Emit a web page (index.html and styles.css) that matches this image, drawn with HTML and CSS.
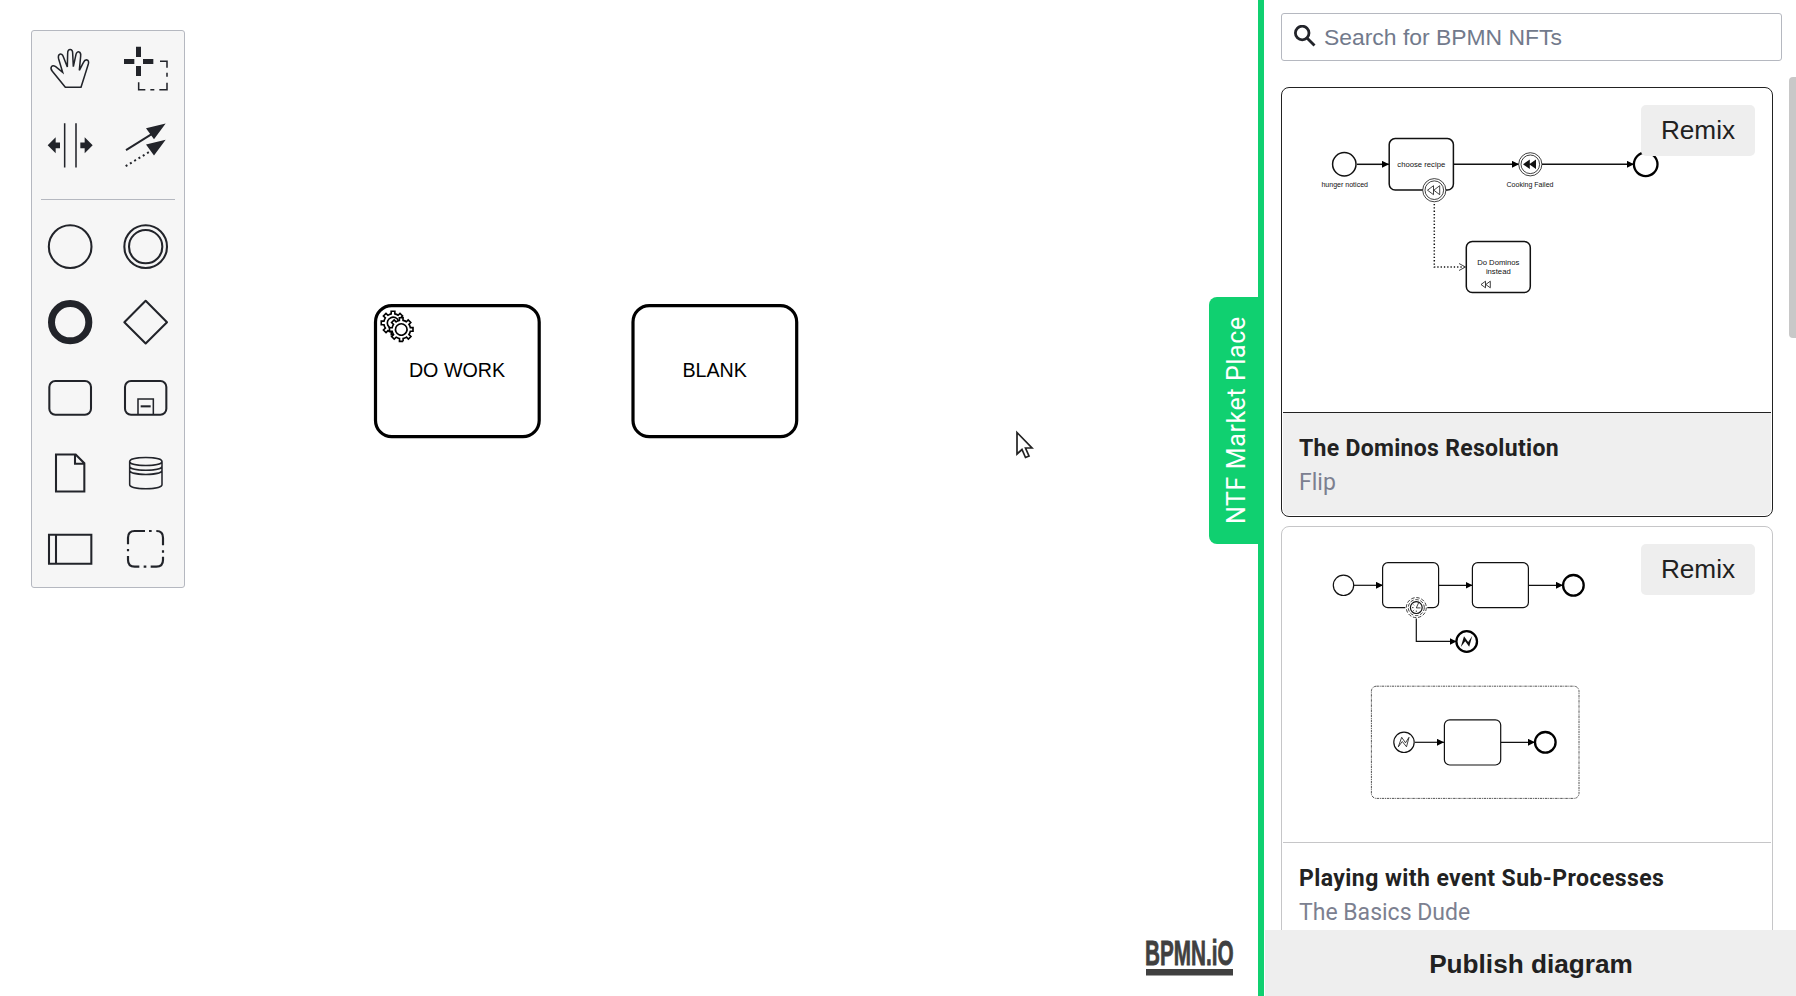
FILE: index.html
```html
<!DOCTYPE html>
<html lang="en">
<head>
<meta charset="utf-8">
<title>BPMN NFT Market Place</title>
<link rel="stylesheet" href="styles.css">
</head>
<body>
<div class="app">
  <main class="canvas">
    <div class="palette">
      <div class="tools">
        <svg viewBox="36 33 228 226.5"><path d="M136 202L97 154C88 142 96 133 107 140L128 157L116 117C112 101 125 97 130 110L142 141L143 100C143 85 158 85 158 100L160 140L168 103C171 91 184 94 182 108L178 151L190 128C196 115 209 118 205 132L193 170L183 202Z"/></svg>
        <svg viewBox="264 33 228 226.5"><path class="solid" d="M348 80h15v31h-15zM348 138h15v30h-15zM312 117h31v15h-31zM369 117h31v15h-31z"/><path d="M420 124h21v19M441 158v12M441 188v21h-23M403 209h-12M376 209h-20v-22"/></svg>
        <svg viewBox="36 259.5 228 226.5"><path d="M134 308v133M168 308v133"/><path class="solid" d="M83 374l24-24v16h13v17h-13v15zM218 374l-24-24v16h-13v17h13v15z"/></svg>
        <svg viewBox="264 259.5 228 226.5"><path class="thick" d="M318 389L395 341"/><path class="thick" stroke-dasharray="6 9" d="M317 437L390 393"/><path class="solid" d="M437 309L378 323L402 356ZM437 358L378 372L402 405Z"/></svg>
      </div>
      <div class="separator"></div>
      <div class="tools">
        <svg viewBox="36 57 228 226.5"><circle class="bold" cx="150.500" cy="170" r="64"/></svg>
        <svg viewBox="264 57 228 226.5"><circle class="bold" cx="377" cy="170" r="64"/><circle class="bold" cx="377" cy="170" r="50"/></svg>
        <svg viewBox="36 283.500 228 226.5"><circle class="ring" cx="150.500" cy="395" r="56"/></svg>
        <svg viewBox="264 283.500 228 226.5"><path class="bold" d="M377 331L441 395L377 459L313 395Z"/></svg>
        <svg viewBox="36 -60 228 226.5"><rect class="bold" x="88" y="3" width="125" height="101" rx="18"/></svg>
        <svg viewBox="264 -60 228 226.5"><rect class="bold" x="315" y="3" width="124" height="101" rx="18"/><path d="M354 104V57h46v47"/><path class="bold" d="M362 79h30"/></svg>
        <svg viewBox="36 166.500 228 226.5"><path class="bold miter" d="M108 222h59l26 26v85h-85zM165 222v28h28"/></svg>
        <svg viewBox="264 166.500 228 226.5"><path d="M329 243c0-16 97-16 97 0v69c0 17-97 17-97 0zM329 243c0 16 97 16 97 0M329 257c0 16 97 16 97 0M329 269c0 17 97 17 97 0"/></svg>
        <svg viewBox="36 393 228 226.5"><path class="bold miter" d="M87 464h127v87H87zM108 464v87"/></svg>
        <svg viewBox="264 393 228 226.5"><path class="bold dashes" d="M324 493v-20q0-20 20-20h31M387 453h8M409 453h1q19 0 19 20v23M429 511v7M429 530v10q0 20-20 20h-17M379 560h-8M358 560h-14q-20 0-20-20v-12M324 514v-7"/></svg>
      </div>
    </div>

    <svg class="diagram" viewBox="0 0 1258 996">
      <defs>
        <path id="gear" d="m0,0 v-1.71335c.352326-.0705.703932-.17838 1.047628-.32133.344416-.14465.665822-.32133.966377-.52145l1.19431 1.18005 1.567487-1.57688-1.195028-1.18014c.403376-.61394.683079-1.29908.825447-2.01824l1.622133-.01v-2.2196l-1.636514.01c-.07333-.35153-.178319-.70024-.323564-1.04372-.145244-.34406-.321407-.6644-.522735-.96217l1.131035-1.13631-1.583305-1.56293-1.129598 1.13589c-.614052-.40108-1.302883-.68093-2.022633-.82247l.0093-1.61852h-2.241173l.0042 1.63124c-.353763.0736-.705369.17977-1.049785.32371-.344415.14437-.665102.32092-.9635.52006l-1.169863-1.15823-1.566769 1.5792 1.168427 1.15669c-.402658.61283-.68308 1.29797-.824729 2.01713l-1.658804.003v2.22174l1.672465-.006c.073327.35077.17976.70243.324285 1.04472.145243.34448.321406.6644.522734.96066l-1.199343 1.19723 1.584026 1.56011 1.196467-1.19348c.614051.40346 1.302882.68232 2.023351.82331l.0007 1.69892h2.226848zm.221462-3.9957c-1.788948.7502-3.8576-.0928-4.609706-1.87438-.752106-1.78321.090598-3.84627 1.880265-4.59604 1.78823-.74936 3.856881.0929 4.608987 1.87437.752106 1.78165-.0906 3.84612-1.879546 4.59605z"/>
      </defs>
      <rect class="task" x="375.500" y="305.700" width="163.700" height="131" rx="16.300"/>
      <g class="gears" transform="translate(375.300 305.300) scale(1.637)">
        <use href="#gear" x="12" y="18"/>
        <circle class="gear-fill" cx="16.300" cy="15.100" r="4.700"/>
        <use href="#gear" x="17" y="22"/>
      </g>
      <text class="task-label" x="457" y="377">DO WORK</text>
      <rect class="task" x="633" y="305.700" width="163.700" height="131" rx="16.300"/>
      <text class="task-label" x="714.700" y="377">BLANK</text>
      <path class="pointer" d="M1017 432.500V454L1022 449.500L1025.500 457.500L1029 456L1025.500 448H1032Z"/>
      <g class="logo">
        <text transform="translate(1145 965.300) scale(.615 1)" textLength="144" lengthAdjust="spacingAndGlyphs">BPMN.iO</text>
        <rect x="1146" y="969" width="87" height="6.500"/>
      </g>
    </svg>
    <div class="tab">NTF Market Place</div>
  </main>

  <aside class="market">
    <div class="search">
      <svg class="search-icon" viewBox="0 0 22 22"><circle cx="8.200" cy="8" r="6.800"/><path d="M13 13L20.500 20.500"/></svg>
      <span class="placeholder">Search for BPMN NFTs</span>
    </div>
    <div class="list">
      <article class="card selected">
        <svg class="preview" viewBox="1283 89 488 323">
          <defs><marker id="arrow" viewBox="0 0 7 7" refX="7" refY="3.500" markerWidth="7" markerHeight="7" markerUnits="userSpaceOnUse" orient="auto"><path d="M0 0L7 3.500L0 7Z"/></marker></defs>
          <g class="shapes wide">
            <path class="flow" marker-end="url(#arrow)" d="M1357 164.300H1389"/>
            <path class="flow" marker-end="url(#arrow)" d="M1454 164.300H1519"/>
            <path class="flow" marker-end="url(#arrow)" d="M1542 164.300H1634"/>
            <circle cx="1344.300" cy="164.300" r="11.700"/>
            <rect x="1389.200" y="138.600" width="64.200" height="51.500" rx="6"/>
            <circle class="fine" cx="1434.300" cy="190.200" r="11.600"/>
            <circle class="fine" cx="1434.300" cy="190.200" r="9.300"/>
            <path class="fine" d="M1433.500 185.700V194.700L1427.500 190.200ZM1439.700 185.700V194.700L1433.800 190.200Z"/>
            <circle class="fine" cx="1530.300" cy="164.300" r="11.600"/>
            <circle class="fine" cx="1530.300" cy="164.300" r="9.300"/>
            <path class="filled" d="M1529.800 159.500V169.100L1523 164.300ZM1536 159.500V169.100L1529.200 164.300Z"/>
            <circle class="end" cx="1645.700" cy="164.300" r="11.800"/>
            <path class="dotted" d="M1434.300 204V267H1464"/>
            <path class="fine" d="M1459 263.500L1465.500 267L1459 270.500"/>
            <rect x="1466.300" y="241.500" width="64" height="51" rx="6"/>
            <path class="fine" d="M1485.500 281.200V287.800L1481 284.500ZM1490.300 281.200V287.800L1485.800 284.500Z"/>
          </g>
          <g class="small-text">
            <text class="inner" x="1421.300" y="166.700">choose recipe</text>
            <text x="1344.700" y="186.700">hunger noticed</text>
            <text x="1530" y="186.700">Cooking Failed</text>
            <text class="inner" x="1498.300" y="264.700">Do Dominos</text>
            <text class="inner" x="1498.300" y="274">instead</text>
          </g>
        </svg>
        <button class="remix">Remix</button>
        <div class="info">
          <h2 class="title title-a">The Dominos Resolution</h2>
          <p class="author">Flip</p>
        </div>
      </article>
      <article class="card">
        <svg class="preview short" viewBox="1283 528 488 314">
          <g class="shapes">
            <rect class="subprocess" x="1371.400" y="686.200" width="207.600" height="112.200" rx="5"/>
            <path class="flow" marker-end="url(#arrow)" d="M1354 585.300H1383"/>
            <path class="flow" marker-end="url(#arrow)" d="M1439 585.300H1472.500"/>
            <path class="flow" marker-end="url(#arrow)" d="M1529 585.300H1563"/>
            <path class="flow" marker-end="url(#arrow)" d="M1416.300 618V641.400H1456.500"/>
            <path class="flow" marker-end="url(#arrow)" d="M1415 742.300H1444"/>
            <path class="flow" marker-end="url(#arrow)" d="M1501 742.300H1535"/>
            <circle cx="1343.500" cy="585.300" r="10.200"/>
            <rect x="1382.600" y="562.700" width="56" height="45" rx="5.300"/>
            <rect x="1472.400" y="562.700" width="56" height="45" rx="5.300"/>
            <circle class="end" cx="1573.400" cy="585.300" r="10.300"/>
            <circle class="mask" cx="1416.300" cy="607.600" r="11"/>
            <circle class="fine dashed" cx="1416.300" cy="607.600" r="10"/>
            <circle class="fine dashed" cx="1416.300" cy="607.600" r="8"/>
            <circle cx="1416.300" cy="607.600" r="5.900"/>
            <path class="fine" d="M1418.500 603L1416.300 607.900H1420.500M1412 607.600h1.500M1416.300 612v-1.500M1413.300 604.500l.8.800M1413.300 610.700l.8-.8"/>
            <circle class="end" cx="1466.700" cy="641.500" r="10.300"/>
            <path class="filled" d="M1460.800 647L1464 636.300L1468.200 642L1472.200 636L1469.200 646.700L1465.200 641.200Z"/>
            <circle cx="1404" cy="742.300" r="10.200"/>
            <path class="fine" d="M1398.300 746.800L1401.700 737.300L1405.500 742.800L1409 737.300L1406.500 746.800L1402.300 741.500Z"/>
            <rect x="1444.400" y="719.800" width="56.300" height="45.200" rx="5.300"/>
            <circle class="end" cx="1545.300" cy="742.300" r="10.300"/>
          </g>
        </svg>
        <button class="remix">Remix</button>
        <div class="info">
          <h2 class="title title-b">Playing with event Sub-Processes</h2>
          <p class="author">The Basics Dude</p>
        </div>
      </article>
    </div>
    <div class="scrollbar"></div>
    <button class="publish">Publish diagram</button>
  </aside>
</div>
</body>
</html>
```
FILE: styles.css
```css
* { box-sizing: border-box; }
body {
  margin: 0;
  overflow: hidden;
  background: #fff;
  color: #22242a;
  font-family: "Liberation Sans", Arial, sans-serif;
}
button { border: 0; font-family: inherit; color: #212121; background: #eee; }
.app { display: flex; width: 1796px; height: 996px; }

/* Modelling canvas */
.canvas { position: relative; width: 1258px; padding: 30px 0 0 31px; }
.palette {
  width: 154px;
  height: 558px;
  border: 1px solid #b5b8c0;
  border-radius: 3px;
  background: #f6f6f6;
}
.tools { display: grid; grid-template-columns: 76px 76px; grid-auto-rows: 75.5px; }
.tools svg { display: block; width: 76px; height: 75.5px; fill: none; stroke: #22242a; stroke-width: 4.6; }
.tools .solid { fill: #22242a; stroke: none; }
.tools .thick { stroke-width: 6; }
.tools .bold { stroke-width: 6.2; stroke-linejoin: round; }
.tools .miter { stroke-linejoin: miter; }
.tools .dashes { stroke-width: 6.5; }
.tools .ring { stroke-width: 21; }
.separator { height: 1px; margin: 17px 9px 9px; background: #b5b8c0; }

.diagram { position: absolute; left: 0; top: 0; width: 1258px; height: 996px; pointer-events: none; }
.task { fill: #fff; stroke: #000; stroke-width: 3.2; }
.task-label { font-size: 19.7px; text-anchor: middle; fill: #000; }
.gears { fill: #fff; stroke: #000; stroke-width: 1; }
.gears .gear-fill { stroke: none; }
.pointer { fill: #fff; stroke: #222; stroke-width: 1.7; }
.logo { fill: #404040; font-weight: bold; font-size: 35px; }
.logo text { stroke: #404040; stroke-width: .8; }

.tab {
  position: absolute;
  right: 0;
  top: 297px;
  width: 49px;
  height: 247px;
  border-radius: 0 8px 8px 0;
  background: #10d070;
  color: #fff;
  font: 25px/43px Roboto, sans-serif;
  letter-spacing: .6px;
  text-align: center;
  writing-mode: vertical-rl;
  transform: rotate(180deg);
  padding-right: 6px;
}

/* Market place panel */
.market {
  position: relative;
  display: flex;
  flex-direction: column;
  width: 538px;
  border-left: 6px solid #10d070;
}
.search {
  display: flex;
  align-items: center;
  flex: none;
  width: 501px;
  height: 48px;
  margin: 13px 0 0 17px;
  padding-left: 12px;
  border: 1px solid #b5b8c0;
  border-radius: 3px;
}
.search-icon { width: 22px; height: 22px; margin-top: -2px; fill: none; stroke: #22242a; stroke-width: 2.8; }
.placeholder { margin-left: 8px; font-size: 22.9px; color: #727a8c; }
.list { flex: 1; min-height: 0; margin-top: 26px; padding-left: 17px; overflow: hidden; }
.card {
  position: relative;
  width: 492px;
  height: 430px;
  margin-bottom: 9px;
  padding: 1px;
  border: 1px solid #c6c6c8;
  border-radius: 8px;
}
.card.selected { border-color: #222; }
.preview { display: block; width: 488px; height: 323px; }
.preview.short { height: 314px; }
.remix {
  position: absolute;
  top: 17px;
  right: 17px;
  width: 114px;
  height: 51px;
  padding: 0;
  border-radius: 5px;
  font-size: 26.2px;
}
.info { height: 103px; padding: 22px 16px 0; border-top: 1px solid #c6c6c8; border-radius: 0 0 6px 6px; }
.selected .info { border-top-color: #222; background: #efefef; }
.title, .author { margin: 0; font-family: Roboto, sans-serif; font-size: 23px; line-height: 28px; white-space: nowrap; }
.title { color: #222; font-weight: 700; }
.title-a { letter-spacing: .3px; }
.title-b { letter-spacing: .43px; }
.author { margin-top: 6px; color: #7c8090; font-weight: 400; }

.shapes { fill: none; stroke: #111; stroke-width: 1.2; }
.shapes.wide { stroke-width: 1.5; }
.shapes .fine { stroke-width: .8; }
.shapes .filled { fill: #111; stroke: none; }
.shapes .end { stroke: #000; stroke-width: 2.3; }
.shapes rect, .shapes circle { fill: #fff; }
.shapes .mask { stroke: none; }
.shapes .dotted { stroke-dasharray: 1.3 2; }
.shapes .dashed { stroke-dasharray: 3.5 1.7; }
.shapes .subprocess { stroke-width: 1; stroke: #555; stroke-dasharray: 2.5 .8 1 .8; }
.small-text { fill: #111; font-size: 7.05px; text-anchor: middle; }
.small-text .inner { font-size: 7.7px; }

.scrollbar {
  position: absolute;
  right: 0;
  top: 77px;
  width: 7px;
  height: 261px;
  border-radius: 4px 0 0 4px;
  background: #c8c8c8;
}
.publish { flex: none; height: 66px; margin-left: 1px; padding: 2px 0 0 1px; font-size: 26.2px; font-weight: bold; }
```
